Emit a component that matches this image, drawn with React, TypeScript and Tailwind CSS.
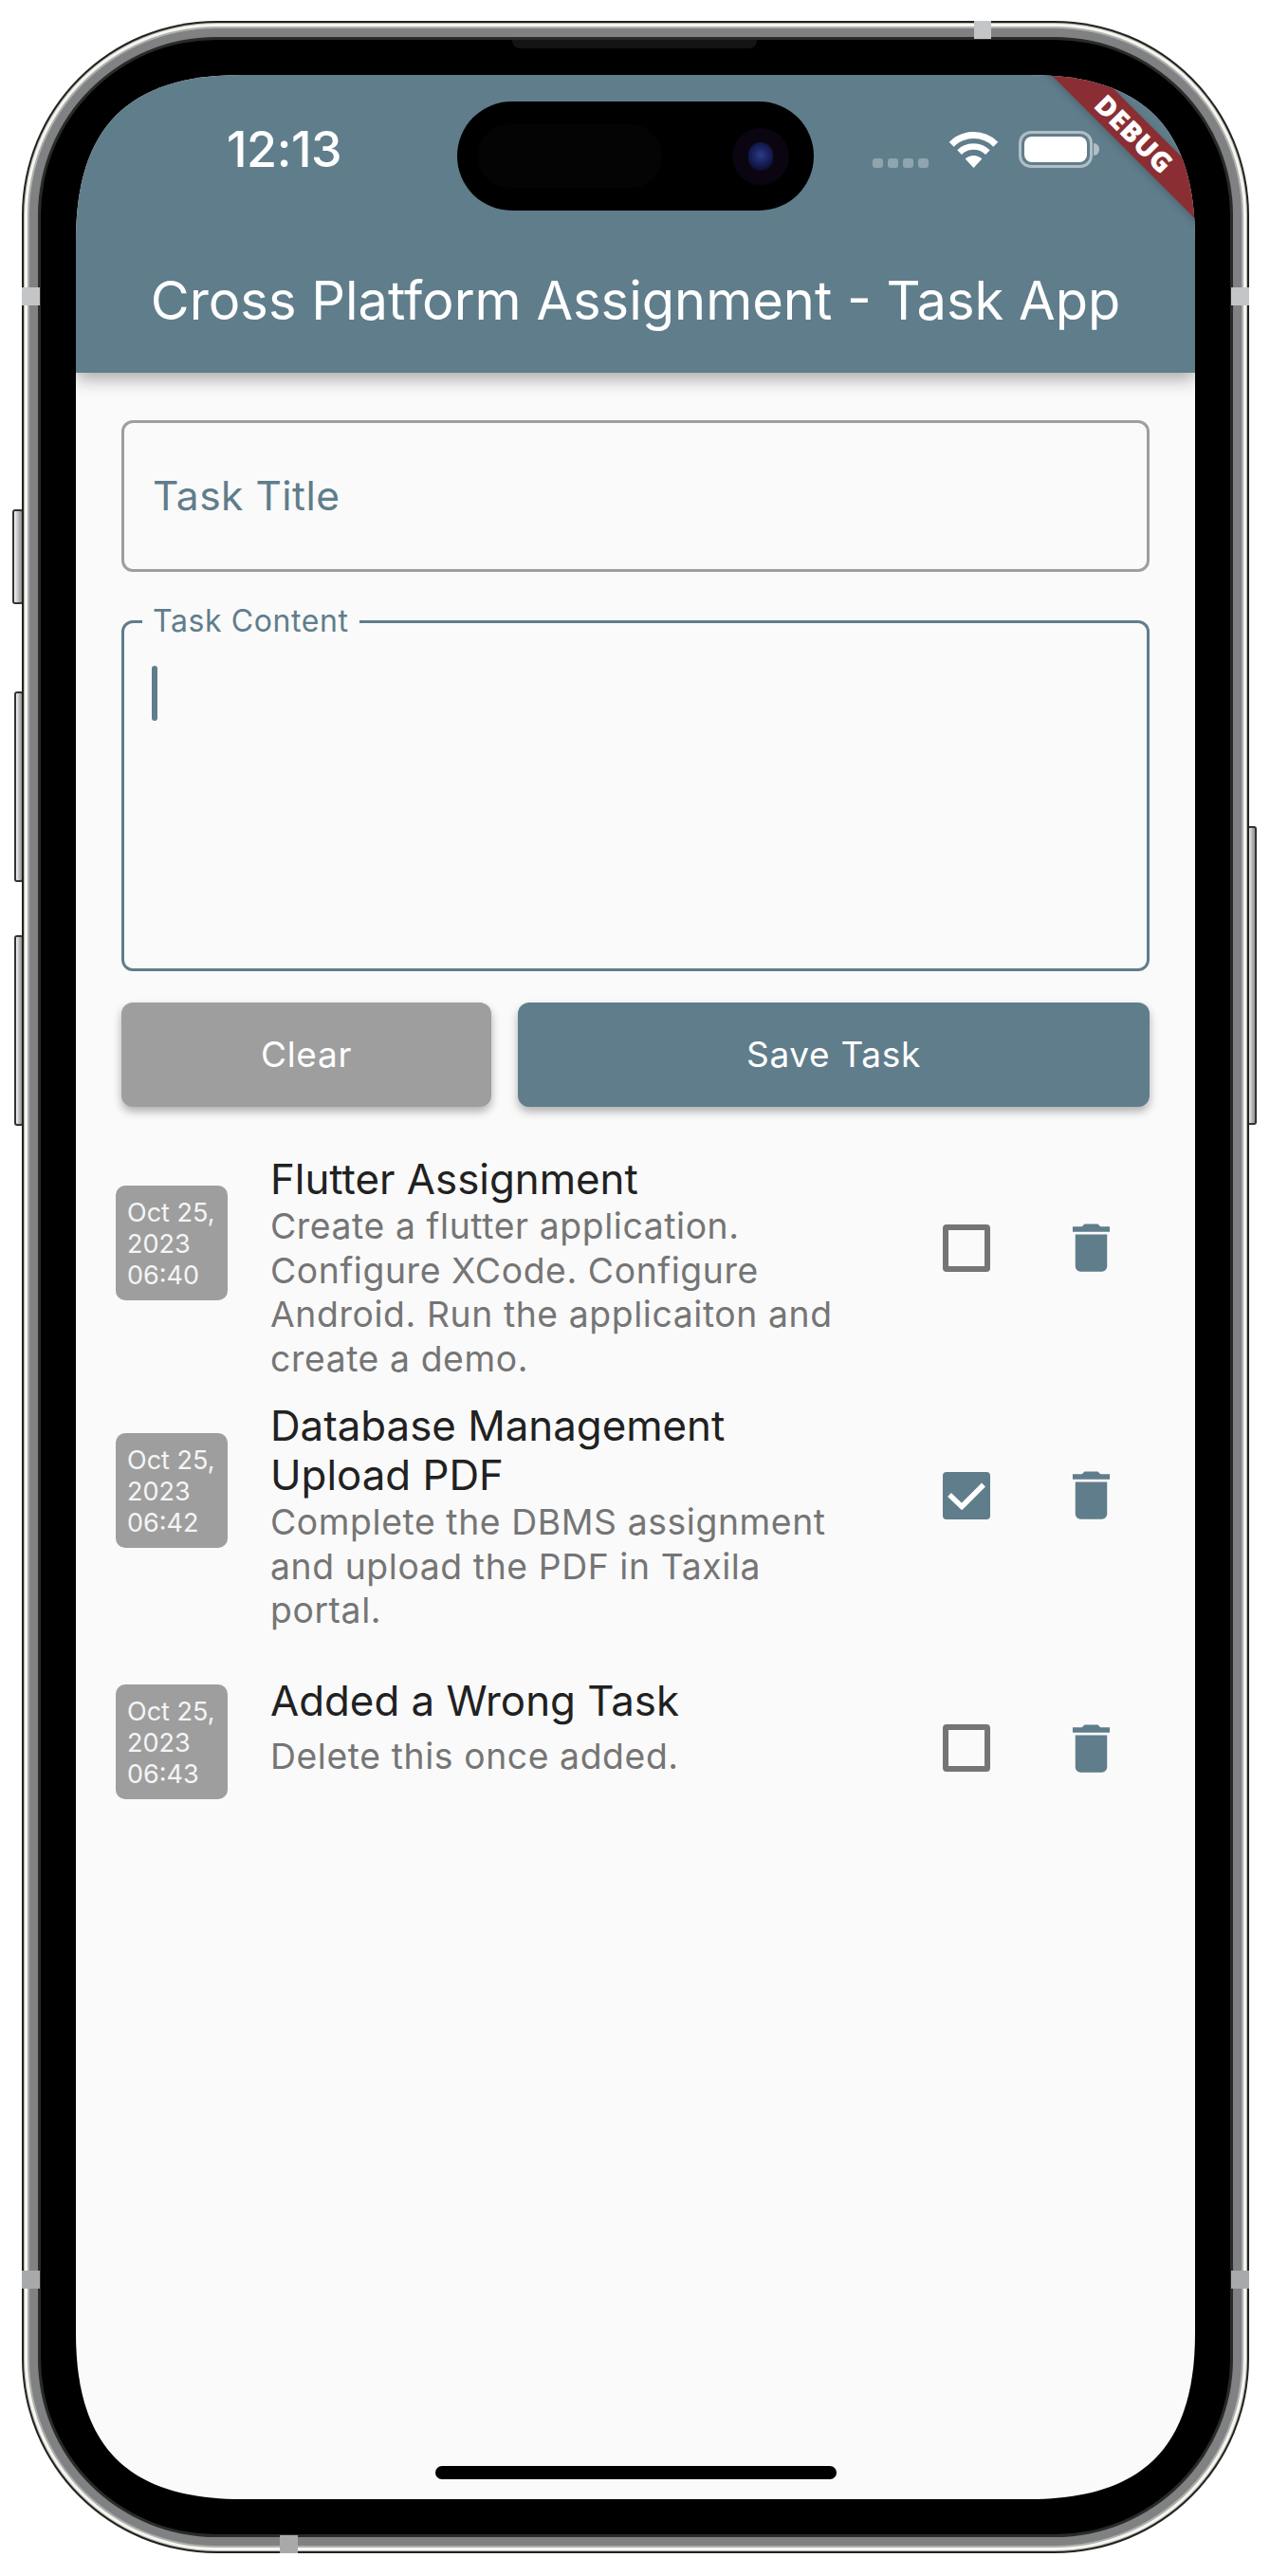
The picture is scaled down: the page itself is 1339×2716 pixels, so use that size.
import React from 'react';

interface Task {
  date: string[];
  title: string[];
  lines: string[];
  done: boolean;
  wrap: string;
  dateTop: string;
  actionTop: string;
  subTop: string;
}

const tasks: Task[] = [
  {
    date: ['Oct 25,', '2023', '06:40'],
    title: ['Flutter Assignment'],
    lines: ['Create a flutter application.', 'Configure XCode. Configure', 'Android. Run the applicaiton and', 'create a demo.'],
    done: false,
    wrap: 'mb-[22px]',
    dateTop: 'mt-[32px]',
    actionTop: 'mt-[64px]',
    subTop: '',
  },
  {
    date: ['Oct 25,', '2023', '06:42'],
    title: ['Database Management', 'Upload PDF'],
    lines: ['Complete the DBMS assignment', 'and upload the PDF in Taxila', 'portal.'],
    done: true,
    wrap: 'mb-[46px]',
    dateTop: 'mt-[33px]',
    actionTop: 'mt-[65px]',
    subTop: '',
  },
  {
    date: ['Oct 25,', '2023', '06:43'],
    title: ['Added a Wrong Task'],
    lines: ['Delete this once added.'],
    done: false,
    wrap: '',
    dateTop: 'mt-[8px]',
    actionTop: 'mt-[42px]',
    subTop: 'mt-[9px]',
  },
];

function WifiIcon() {
  return (
    <svg width="53" height="39" viewBox="0 0 53 39" fill="none">
      <path d="M3.2 14.2A33 33 0 0 1 49.8 14.2" stroke="#fff" strokeWidth="7" />
      <path d="M11.6 22.6A21 21 0 0 1 41.4 22.6" stroke="#fff" strokeWidth="6.5" />
      <path d="M26.5 39L17.7 29.6A12.5 12.5 0 0 1 35.3 29.6Z" fill="#fff" />
    </svg>
  );
}

function BatteryIcon() {
  return (
    <div className="flex items-center">
      <div className="h-[39px] w-[78px] rounded-[13px] border-[3px] border-white/50 p-[3px]">
        <div className="h-full w-full rounded-[8px] bg-white" />
      </div>
      <div className="ml-[1px] h-[13px] w-[6px] rounded-r-full bg-white/50" />
    </div>
  );
}

function StatusBar() {
  return (
    <div className="flex h-[156px] items-center pl-[159px] pr-[101px] text-white">
      <span className="mt-[2px] text-[52px] font-medium tracking-[-0.5px]">12:13</span>
      <div className="ml-auto flex items-center gap-[21px]">
        <div className="mt-[30px] flex gap-[5px]">
          <div className="h-[10px] w-[11px] rounded-[3px] bg-white/30" />
          <div className="h-[10px] w-[11px] rounded-[3px] bg-white/30" />
          <div className="h-[10px] w-[11px] rounded-[3px] bg-white/30" />
          <div className="h-[10px] w-[11px] rounded-[3px] bg-white/30" />
        </div>
        <WifiIcon />
        <BatteryIcon />
      </div>
    </div>
  );
}

function DateBadge({ date }: { date: string[] }) {
  return (
    <div className="h-[121px] w-[118px] shrink-0 rounded-[10px] bg-[#9e9e9e] pl-[12px] pt-[12px] text-[27px] leading-[33px] whitespace-nowrap text-white/90">
      {date.map(line => (
        <div key={line}>{line}</div>
      ))}
    </div>
  );
}

function TaskRow({ task }: { task: Task }) {
  return (
    <div className={`flex items-start pl-[42px] ${task.wrap}`}>
      <div className={task.dateTop}>
        <DateBadge date={task.date} />
      </div>
      <div className="ml-[45px] w-[709px] shrink-0">
        {task.title.map(line => (
          <div key={line} className="text-[43.8px] leading-[52px] text-[#212121]">
            {line}
          </div>
        ))}
        <div className={task.subTop}>
          {task.lines.map(line => (
            <div key={line} className="text-[37.3px] leading-[46.5px] tracking-[0.6px] text-[#757575]">
              {line}
            </div>
          ))}
        </div>
      </div>
      <div className={`flex items-center ${task.actionTop}`}>
        {task.done ? (
          <div className="size-[50px] rounded-[4px] bg-[#607d8b]">
            <svg width="50" height="50" viewBox="0 0 50 50" fill="none">
              <path d="M7 24L20 36.5L43 13.5" stroke="#fff" strokeWidth="5.5" />
            </svg>
          </div>
        ) : (
          <div className="size-[50px] rounded-[4px] border-[6px] border-[#757575]" />
        )}
        <svg className="ml-[73px]" width="67" height="67" viewBox="0 0 24 24" fill="#607d8b">
          <path d="M6 19c0 1.1.9 2 2 2h8c1.1 0 2-.9 2-2V7H6v12zM19 4h-3.5l-1-1h-5l-1 1H5v2h14V4z" />
        </svg>
      </div>
    </div>
  );
}

function Screen() {
  return (
    <div className="relative flex h-[2556px] w-[1180px] flex-col overflow-hidden bg-[#fafafa] font-['Inter',sans-serif] [clip-path:path('M175_0H1005C1125_0_1180_55_1180_175V2381C1180_2501_1125_2556_1005_2556H175C55_2556_0_2501_0_2381V175C0_55_55_0_175_0Z')]">
      <header className="relative z-10 h-[314px] shrink-0 bg-[#607d8b] shadow-[0_6px_18px_rgba(0,0,0,0.35)]">
        <StatusBar />
        <div className="flex h-[158px] items-center justify-center pt-[6px] text-[56px] text-white">
          Cross Platform Assignment - Task App
        </div>
      </header>

      <main className="px-[48px] pt-[50px]">
        <div className="flex h-[160px] items-center rounded-[12px] border-[3px] border-[#9e9e9e] pl-[30px] text-[42.5px] tracking-[0.5px] text-[#607d8b]">
          Task Title
        </div>
        <div className="relative mt-[51px] h-[370px] rounded-[12px] border-[3px] border-[#607d8b] pl-[29px] pt-[45px]">
          <span className="absolute left-[19px] top-[-25px] bg-[#fafafa] px-[11px] text-[32px] leading-[46px] tracking-[0.6px] text-[#607d8b]">
            Task Content
          </span>
          <div className="h-[58px] w-[6px] rounded-full bg-[#607d8b]" />
        </div>
        <div className="mt-[33px] flex gap-[28px]">
          <button className="h-[110px] w-[390px] rounded-[12px] bg-[#9e9e9e] text-[37px] tracking-[0.7px] text-white shadow-[0_5px_10px_rgba(0,0,0,0.3)]">
            Clear
          </button>
          <button className="h-[110px] flex-1 rounded-[12px] bg-[#607d8b] text-[37px] tracking-[0.7px] text-white shadow-[0_5px_10px_rgba(0,0,0,0.3)]">
            Save Task
          </button>
        </div>
      </main>

      <section className="pt-[51px]">
        {tasks.map(task => (
          <TaskRow key={task.date[2]} task={task} />
        ))}
      </section>

      {/* debug banner */}
      <div className="absolute left-[916px] top-[44px] z-20 flex h-[36px] w-[400px] rotate-45 items-center justify-center bg-[#8a2e33] font-['Open_Sans',sans-serif] text-[29px] font-extrabold tracking-[0.5px] text-white shadow-[0_2px_8px_rgba(0,0,0,0.2)]">
        DEBUG
      </div>

      {/* dynamic island */}
      <div className="absolute left-[402px] top-[28px] z-30 flex h-[115px] w-[376px] items-center rounded-full bg-black">
        <div className="ml-[22px] h-[67px] w-[194px] rounded-full bg-[#040404]" />
        <div className="ml-[74px] flex size-[60px] items-center justify-center rounded-full bg-[#0a0510]">
          <div className="h-[30px] w-[26px] rounded-full bg-[radial-gradient(circle_at_50%_45%,#2c3a86_0%,#161d55_50%,#0b0e2a_80%)]" />
        </div>
      </div>

      <div className="absolute bottom-[21px] left-[379px] z-30 h-[14px] w-[423px] rounded-full bg-black" />
    </div>
  );
}

function SideButton({ place }: { place: string }) {
  return (
    <div className={`absolute rounded-[3px] border-[2px] border-[#333] bg-[linear-gradient(to_right,#f5f5f5,#b5b7b8_60%,#8d8f90)] ${place}`} />
  );
}

export default function App() {
  return (
    <div className="relative h-[2716px] w-[1339px] overflow-hidden bg-white pl-[23px] pt-[22px]">
      <SideButton place="left-[13px] top-[537px] h-[100px] w-[12px]" />
      <SideButton place="left-[15px] top-[729px] h-[201px] w-[10px]" />
      <SideButton place="left-[15px] top-[986px] h-[201px] w-[10px]" />
      <SideButton place="left-[1314px] top-[871px] h-[315px] w-[11px]" />

      {/* device frame, rings from the outside in */}
      <div className="relative w-fit rounded-[205px] bg-[#222] p-[2px]">
        <div className="rounded-[203px] bg-[#b9b9b4] p-[1px]">
          <div className="rounded-[202px] bg-[#f6f6ee] p-[3px]">
            <div className="rounded-[199px] bg-[#aeb0b0] p-[2px]">
              <div className="rounded-[197px] bg-[#7f8182] p-[9px]">
                <div className="rounded-[188px] bg-[#2a2a2a] p-[3px]">
                  <div className="relative rounded-[185px] bg-black p-[37px]">
                    <div className="absolute left-[497px] top-0 h-[9px] w-[258px] rounded-b-[8px] bg-[#141414]" />
                    <Screen />
                  </div>
                </div>
              </div>
            </div>
          </div>
        </div>

        {/* antenna bands */}
        <div className="absolute left-[1004px] top-0 h-[19px] w-[18px] bg-[#c4c5c6]" />
        <div className="absolute left-0 top-[281px] h-[19px] w-[19px] bg-[#c4c5c6]" />
        <div className="absolute right-0 top-[281px] h-[19px] w-[19px] bg-[#c4c5c6]" />
        <div className="absolute left-0 top-[2372px] h-[19px] w-[19px] bg-[#a8a9aa]" />
        <div className="absolute right-0 top-[2372px] h-[19px] w-[19px] bg-[#a8a9aa]" />
        <div className="absolute bottom-0 left-[272px] h-[19px] w-[19px] bg-[#a8a9aa]" />
      </div>
    </div>
  );
}
